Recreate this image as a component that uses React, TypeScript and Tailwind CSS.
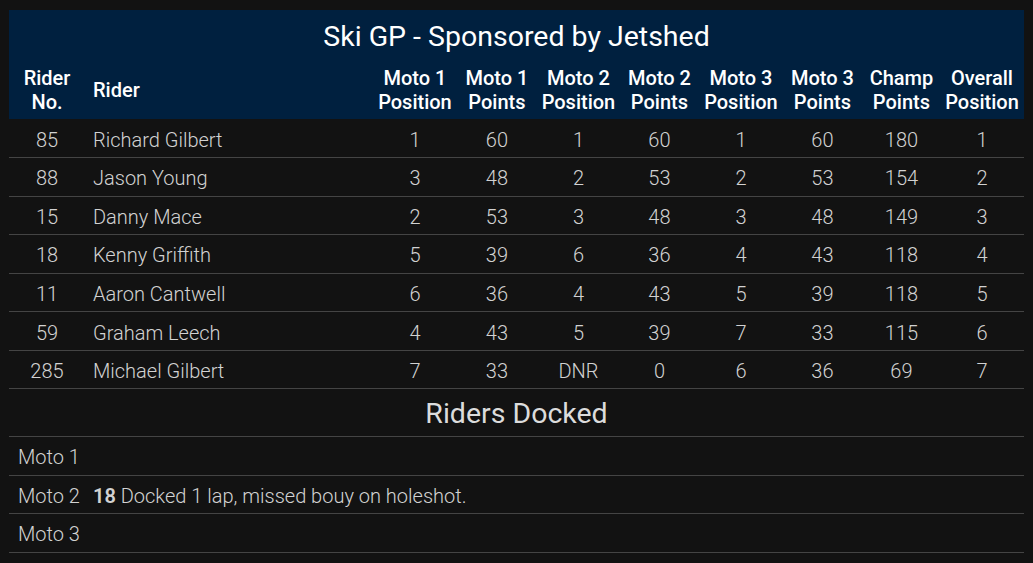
import React from "react";

type Row = {
  no: string;
  name: string;
  m1p: string;
  m1pts: string;
  m2p: string;
  m2pts: string;
  m3p: string;
  m3pts: string;
  champ: string;
  overall: string;
};

const rows: Row[] = [
  { no: "85", name: "Richard Gilbert", m1p: "1", m1pts: "60", m2p: "1", m2pts: "60", m3p: "1", m3pts: "60", champ: "180", overall: "1" },
  { no: "88", name: "Jason Young", m1p: "3", m1pts: "48", m2p: "2", m2pts: "53", m3p: "2", m3pts: "53", champ: "154", overall: "2" },
  { no: "15", name: "Danny Mace", m1p: "2", m1pts: "53", m2p: "3", m2pts: "48", m3p: "3", m3pts: "48", champ: "149", overall: "3" },
  { no: "18", name: "Kenny Griffith", m1p: "5", m1pts: "39", m2p: "6", m2pts: "36", m3p: "4", m3pts: "43", champ: "118", overall: "4" },
  { no: "11", name: "Aaron Cantwell", m1p: "6", m1pts: "36", m2p: "4", m2pts: "43", m3p: "5", m3pts: "39", champ: "118", overall: "5" },
  { no: "59", name: "Graham Leech", m1p: "4", m1pts: "43", m2p: "5", m2pts: "39", m3p: "7", m3pts: "33", champ: "115", overall: "6" },
  { no: "285", name: "Michael Gilbert", m1p: "7", m1pts: "33", m2p: "DNR", m2pts: "0", m3p: "6", m3pts: "36", champ: "69", overall: "7" },
];

const headers = [
  ["Moto 1", "Position"],
  ["Moto 1", "Points"],
  ["Moto 2", "Position"],
  ["Moto 2", "Points"],
  ["Moto 3", "Position"],
  ["Moto 3", "Points"],
  ["Champ", "Points"],
  ["Overall", "Position"],
];

const docked = [
  { moto: "Moto 1", no: "", note: "" },
  { moto: "Moto 2", no: "18", note: "Docked 1 lap, missed bouy on holeshot." },
  { moto: "Moto 3", no: "", note: "" },
];

export default function App() {
  return (
    <div
      className="min-h-[563px] bg-[#121212] px-[9px] pt-[10px] text-[#d2d2d2]"
      style={{ fontFamily: "Roboto, 'Liberation Sans', sans-serif" }}
    >
      <table className="w-full table-fixed border-collapse">
        <colgroup>
          <col className="w-[76px]" />
          <col />
          <col className="w-[82px]" />
          <col className="w-[82px]" />
          <col className="w-[81px]" />
          <col className="w-[81px]" />
          <col className="w-[82px]" />
          <col className="w-[81px]" />
          <col className="w-[77px]" />
          <col className="w-[84px]" />
        </colgroup>
        <thead className="bg-[#00203f] text-white">
          <tr>
            <th colSpan={10} className="h-[52px] pt-[2px] text-center text-[28.5px] font-normal">
              Ski GP - Sponsored by Jetshed
            </th>
          </tr>
          <tr className="h-[57px] text-[20px] leading-[24px]">
            <th className="pb-[2px] text-center font-medium">
              Rider
              <br />
              No.
            </th>
            <th className="pb-[2px] pl-[8px] text-left font-medium">Rider</th>
            {headers.map(([a, b], i) => (
              <th key={i} className="pb-[2px] text-center font-medium">
                {a}
                <br />
                {b}
              </th>
            ))}
          </tr>
        </thead>
        <tbody className="text-[20px] font-light">
          {rows.map((r) => (
            <tr key={r.no} className="h-[38.57px] border-b border-[#444]">
              <td className="pt-[3px] text-center">{r.no}</td>
              <td className="pt-[3px] pl-[8px] text-left">{r.name}</td>
              <td className="pt-[3px] text-center">{r.m1p}</td>
              <td className="pt-[3px] text-center">{r.m1pts}</td>
              <td className="pt-[3px] text-center">{r.m2p}</td>
              <td className="pt-[3px] text-center">{r.m2pts}</td>
              <td className="pt-[3px] text-center">{r.m3p}</td>
              <td className="pt-[3px] text-center">{r.m3pts}</td>
              <td className="pt-[3px] text-center">{r.champ}</td>
              <td className="pt-[3px] text-center">{r.overall}</td>
            </tr>
          ))}
          <tr className="h-[48px] border-b border-[#444]">
            <td colSpan={10} className="pt-[2px] text-center text-[28.5px] font-normal text-[#dcdcdc]">
              Riders Docked
            </td>
          </tr>
          {docked.map((d) => (
            <tr key={d.moto} className="h-[38.5px] border-b border-[#444]">
              <td className="pt-[2px] pl-[9px] text-left">{d.moto}</td>
              <td colSpan={9} className="pt-[2px] pl-[8px] text-left">
                {d.no && <span className="font-semibold">{d.no}</span>} {d.note}
              </td>
            </tr>
          ))}
        </tbody>
      </table>
    </div>
  );
}
